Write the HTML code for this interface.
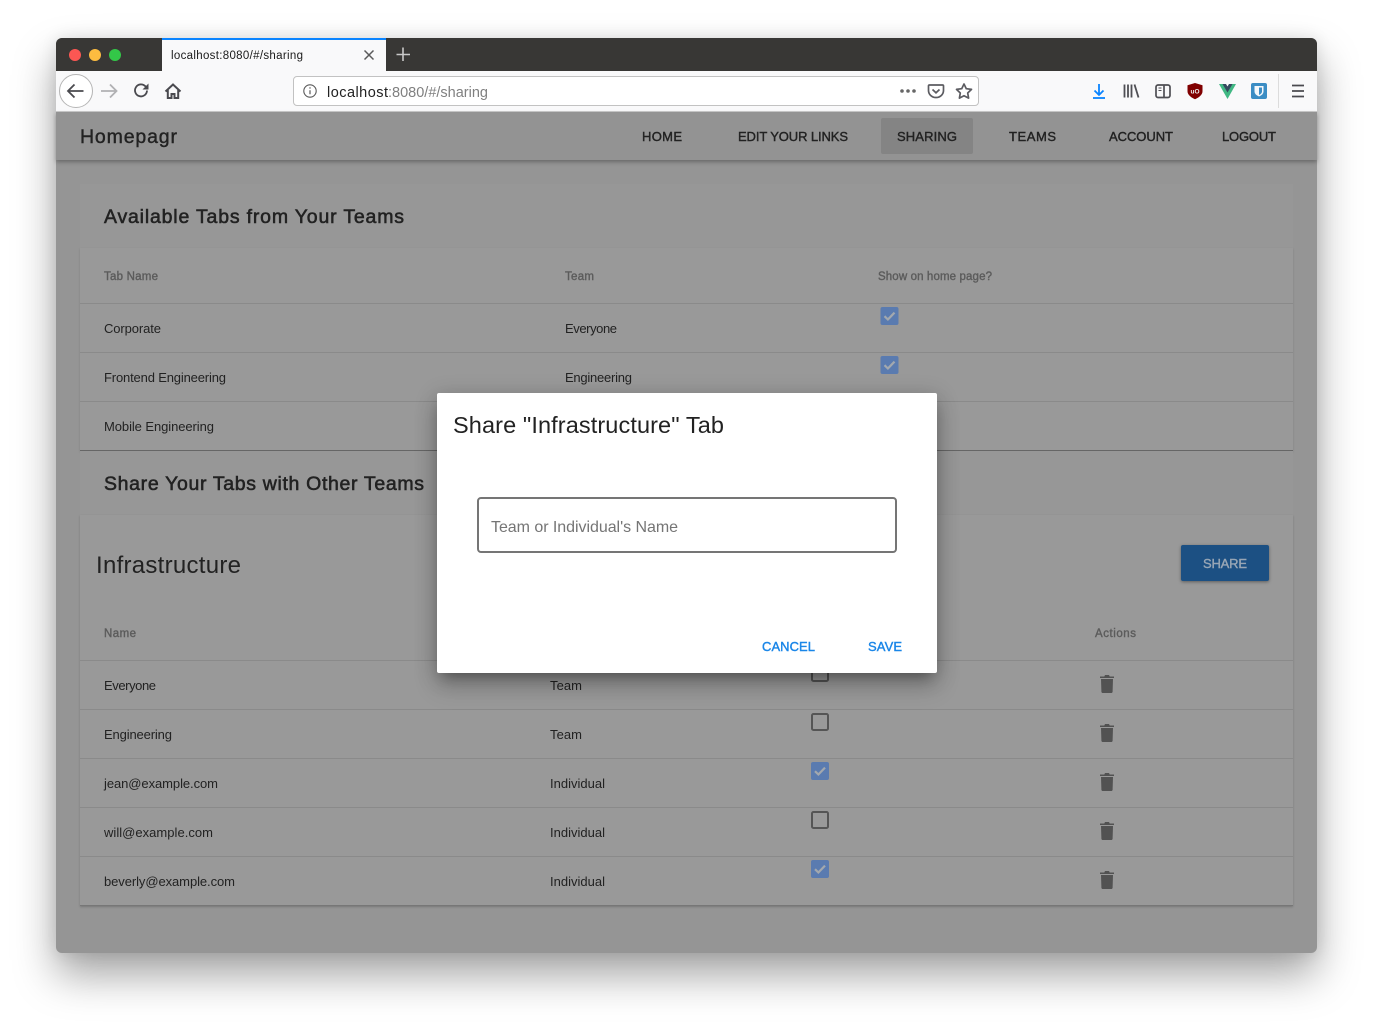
<!DOCTYPE html>
<html><head><meta charset="utf-8"><title>Homepagr</title>
<style>
html,body{margin:0;padding:0;background:#fff;width:1373px;height:1027px;overflow:hidden}
div,svg{position:absolute}
svg{left:0;top:0;overflow:visible}
text{font-family:"Liberation Sans",sans-serif;white-space:pre}
.m{stroke:currentColor;stroke-width:.4}
.h{stroke:currentColor;stroke-width:.55}
</style></head><body>
<div style="left:56px;top:38px;width:1261px;height:915px;border-radius:6px;background:#959595;box-shadow:0 22px 42px rgba(0,0,0,.36),0 0 16px rgba(0,0,0,.1)"></div>
<div style="left:56px;top:38px;width:1261px;height:33px;background:#383735;border-radius:6px 6px 0 0"></div>
<div style="left:162px;top:38px;width:224px;height:33px;background:#f9f9fa;border-top:2px solid #0a84ff;box-sizing:border-box"></div>
<div style="left:56px;top:71px;width:1261px;height:41px;background:#f9f9fa;border-bottom:1px solid #ccc;box-sizing:border-box"></div>
<div style="left:293px;top:76px;width:686px;height:30px;background:#fff;border:1px solid #c2c2c2;border-radius:4px;box-sizing:border-box"></div>
<div style="left:59px;top:74px;width:34px;height:34px;background:#fff;border:1px solid #b5b5b5;border-radius:50%;box-sizing:border-box"></div>
<div style="left:56px;top:112px;width:1261px;height:48px;background:#939393;box-shadow:0 2px 4px rgba(0,0,0,.3)"></div>
<div style="left:881px;top:118px;width:92px;height:36px;background:#848484;border-radius:2px"></div>
<div style="left:80px;top:184px;width:1213px;height:64px;background:#979797"></div>
<div style="left:80px;top:248px;width:1213px;height:203px;background:#999;box-shadow:0 1px 2px rgba(0,0,0,.14)"></div>
<div style="left:80px;top:451px;width:1213px;height:64px;background:#979797"></div>
<div style="left:80px;top:515px;width:1213px;height:391px;background:#999;box-shadow:0 1px 2px rgba(0,0,0,.2)"></div>
<div style="left:1181px;top:545px;width:88px;height:36px;background:#1c5083;border-radius:2px;box-shadow:0 1px 3px rgba(0,0,0,.4)"></div>

<svg width="1373" height="1027" viewBox="0 0 1373 1027">
<defs>
<g id="cb"><rect x="0" y="0" width="18" height="18" rx="2" fill="#5a7bb0"/><path d="M4 9.200l3.400 3.300L14 5.600" fill="none" stroke="#a3a8ae" stroke-width="2.200"/></g>
<g id="ub"><rect x="1" y="1" width="16" height="16" rx="1.500" fill="none" stroke="#555" stroke-width="2"/></g>
<g id="tr" fill="#525252"><path d="M0 1.500h14v1.500H0z"/><path d="M4.300 1.500L5 0h4l.7 1.500z"/><path d="M1 4h12l-.4 12.600q-.1 1.400-1.500 1.400H2.900q-1.400 0-1.500-1.400z"/></g>
</defs>
<circle cx="75" cy="55" r="6" fill="#fc5753"/><circle cx="95" cy="55" r="6" fill="#fdbc40"/><circle cx="115" cy="55" r="6" fill="#33c748"/>
<text x="171" y="59" font-size="11.500" fill="#1a1a1a" textLength="132">localhost:8080/#/sharing</text>
<path d="M364.500 50.500l9 9M373.500 50.500l-9 9" stroke="#5a5a5a" stroke-width="1.500"/>
<path d="M403 47.500v13.500M396.500 54.500h13.500" stroke="#c8c8c8" stroke-width="1.600"/>
<path d="M83.500 91H68M74.500 84.500L68 91l6.500 6.500" fill="none" stroke="#4a4a4f" stroke-width="1.800"/>
<path d="M101 91h15.500M110 84.500l6.500 6.500-6.500 6.500" fill="none" stroke="#b1b1b3" stroke-width="1.800"/>
<path d="M147 90.500a6 6 0 1 1-1.800-4.400L147.500 88" fill="none" stroke="#4a4a4f" stroke-width="1.800"/><path d="M148.500 83.500v6h-6z" fill="#4a4a4f"/>
<path d="M165.500 91.500l7.500-7 7.500 7M167.800 90v8h3.700v-4h3v4h3.700v-8" fill="none" stroke="#4a4a4f" stroke-width="2"/>
<circle cx="310" cy="91" r="6.200" fill="none" stroke="#5a5a5a" stroke-width="1.100"/><path d="M310 90.200v4M310 87.300v1.300" stroke="#5a5a5a" stroke-width="1.200"/>
<text x="327" y="97" font-size="14.500" fill="#222" textLength="61">localhost</text>
<text x="388" y="97" font-size="14.500" fill="#808080" textLength="100">:8080/#/sharing</text>
<circle cx="902" cy="91" r="1.800" fill="#666"/><circle cx="908" cy="91" r="1.800" fill="#666"/><circle cx="914" cy="91" r="1.800" fill="#666"/>
<path d="M929.500 85h13q1 0 1 1v4.500a7.500 7 0 0 1-15 0V86q0-1 1-1z" fill="none" stroke="#5c5c61" stroke-width="1.700"/><path d="M932.500 89.500l3.500 3.300 3.500-3.300" fill="none" stroke="#5c5c61" stroke-width="1.700"/>
<path d="M964 84l2.300 4.700 5.200.7-3.800 3.600.9 5.100-4.600-2.400-4.600 2.400.9-5.100-3.800-3.600 5.200-.7z" fill="none" stroke="#5c5c61" stroke-width="1.700" stroke-linejoin="round"/>
<path d="M1099 84v11M1094.500 90.500l4.500 4.500 4.500-4.500" fill="none" stroke="#0a84ff" stroke-width="1.800"/><path d="M1093 98h12" stroke="#0a84ff" stroke-width="1.800"/>
<path d="M1124.500 84.500v13M1128 84.500v13M1131.500 84.500v13M1134.500 84.500l4 13" fill="none" stroke="#4f4f54" stroke-width="1.800"/>
<rect x="1156" y="85" width="14" height="12.500" rx="2" fill="none" stroke="#4f4f54" stroke-width="1.700"/><path d="M1164 85v12.500" stroke="#4f4f54" stroke-width="1.700"/><path d="M1158.500 88h3M1158.500 90.500h3" stroke="#4f4f54" stroke-width="1"/>
<path d="M1195 83l7.500 2.200v6q0 4.500-7.500 8q-7.500-3.500-7.500-8v-6z" fill="#800000"/><text x="1190.500" y="93.500" font-size="6.500" font-weight="bold" fill="#eee" textLength="9">uO</text>
<path d="M1219 84h5.500l3 5 3-5h5.500l-8.500 15z" fill="#41b883"/><path d="M1222.500 84h3.500l1.500 2.500 1.500-2.500h3.500l-5 8.500z" fill="#35495e"/>
<rect x="1251" y="83" width="16" height="16" rx="2" fill="#3b8dc4"/><path d="M1254.500 86h9v5.500q0 3-4.500 5q-4.500-2-4.500-5z" fill="#f4f8fb"/><path d="M1259 87.500h3v4q0 2-3 3.500z" fill="#3b8dc4"/>
<path d="M1278.500 74v34" stroke="#dcdcdc"/>
<path d="M1292 85.500h12M1292 91h12M1292 96.500h12" stroke="#4a4a4f" stroke-width="1.800"/>

<g fill="#222" style="color:#222">
<text class="m" x="80" y="143" font-size="19.500" textLength="97">Homepagr</text>
<g font-size="13">
<text class="m" x="642" y="141" textLength="40">HOME</text>
<text class="m" x="738" y="141" textLength="110">EDIT YOUR LINKS</text>
<text class="m" x="897" y="141" textLength="60">SHARING</text>
<text class="m" x="1009" y="141" textLength="47">TEAMS</text>
<text class="m" x="1109" y="141" textLength="64">ACCOUNT</text>
<text class="m" x="1222" y="141" textLength="54">LOGOUT</text>
</g>
<text class="h" x="104" y="223" font-size="19.500" textLength="300">Available Tabs from Your Teams</text>
<text class="h" x="104" y="490" font-size="19.500" textLength="320">Share Your Tabs with Other Teams</text>
<text x="96" y="573" font-size="24" textLength="145">Infrastructure</text>
<g font-size="13">
<text x="104" y="333" textLength="57">Corporate</text><text x="565" y="333" textLength="52">Everyone</text>
<text x="104" y="382" textLength="122">Frontend Engineering</text><text x="565" y="382" textLength="67">Engineering</text>
<text x="104" y="431" textLength="110">Mobile Engineering</text>
<text x="104" y="690" textLength="52">Everyone</text><text x="550" y="690" textLength="32">Team</text>
<text x="104" y="739" textLength="68">Engineering</text><text x="550" y="739" textLength="32">Team</text>
<text x="104" y="788" textLength="114">jean@example.com</text><text x="550" y="788" textLength="55">Individual</text>
<text x="104" y="837" textLength="109">will@example.com</text><text x="550" y="837" textLength="55">Individual</text>
<text x="104" y="886" textLength="131">beverly@example.com</text><text x="550" y="886" textLength="55">Individual</text>
</g></g>
<g fill="#5c5c5c" style="color:#5c5c5c" font-size="11.500">
<text class="m" x="104" y="280" textLength="54">Tab Name</text><text class="m" x="565" y="280" textLength="29">Team</text><text class="m" x="878" y="280" textLength="114">Show on home page?</text>
<text class="m" x="104" y="637" textLength="32">Name</text><text class="m" x="1095" y="637" textLength="41">Actions</text>
</g>
<text class="m" x="1203" y="568" font-size="13" fill="#98a6b5" style="color:#98a6b5" textLength="44">SHARE</text>
<g stroke="#8a8a8a"><path d="M80 303.500h1213M80 352.500h1213M80 401.500h1213M80 660.500h1213M80 709.500h1213M80 758.500h1213M80 807.500h1213M80 856.500h1213"/></g>
<path d="M80 450.500h1213" stroke="#666"/><path d="M80 905.500h1213" stroke="#777"/>
<use href="#cb" x="880.500" y="307"/><use href="#cb" x="880.500" y="356"/>
<use href="#ub" x="811" y="664"/><use href="#ub" x="811" y="713"/><use href="#cb" x="811" y="762"/><use href="#ub" x="811" y="811"/><use href="#cb" x="811" y="860"/>
<use href="#tr" x="1100" y="675"/><use href="#tr" x="1100" y="724"/><use href="#tr" x="1100" y="773"/><use href="#tr" x="1100" y="822"/><use href="#tr" x="1100" y="871"/>
</svg>

<div style="left:437px;top:393px;width:500px;height:280px;background:#fff;border-radius:2px;box-shadow:0 8px 12px -6px rgba(0,0,0,.28),0 14px 24px 0 rgba(0,0,0,.18),0 4px 22px 2px rgba(0,0,0,.16)"></div>
<div style="left:477px;top:497px;width:420px;height:56px;box-sizing:border-box;border:2px solid #757575;border-radius:4px;background:#fff"></div>
<svg width="1373" height="1027" viewBox="0 0 1373 1027">
<text x="453" y="433" font-size="23.500" fill="#222" textLength="271">Share "Infrastructure" Tab</text>
<text x="491" y="532" font-size="16" fill="#757575" textLength="187">Team or Individual's Name</text>
<text class="m" x="762" y="651" font-size="13" fill="#1a86e8" style="color:#1a86e8" textLength="53">CANCEL</text>
<text class="m" x="868" y="651" font-size="13" fill="#1a86e8" style="color:#1a86e8" textLength="34">SAVE</text>
</svg>
</body></html>
